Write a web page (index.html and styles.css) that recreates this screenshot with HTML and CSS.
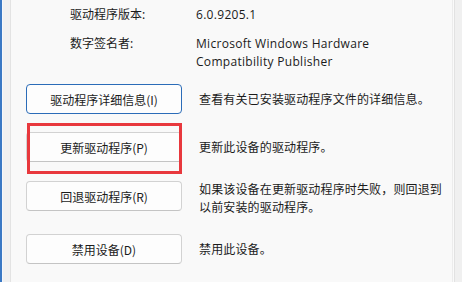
FILE: index.html
```html
<!DOCTYPE html>
<html lang="zh-CN">
<head>
<meta charset="utf-8">
<link rel="stylesheet" href="styles.css">
</head>
<body>
<div class="window">
  <div class="left-edge"><div class="blue"></div><div class="gap"></div><div class="pane"></div></div>
  <div class="content">
    <div class="info">
      <div class="info-row">
        <div class="label">驱动程序版本:</div>
        <div class="value">6.0.9205.1</div>
      </div>
      <div class="info-row second">
        <div class="label">数字签名者:</div>
        <div class="value">Microsoft Windows Hardware<br>Compatibility Publisher</div>
      </div>
    </div>
    <div class="actions">
      <div class="action">
        <button class="btn default">驱动程序详细信息(I)</button>
        <div class="desc">查看有关已安装驱动程序文件的详细信息。</div>
      </div>
      <div class="action highlighted">
        <button class="btn">更新驱动程序(P)</button>
        <div class="desc">更新此设备的驱动程序。</div>
        <div class="red-box"></div>
      </div>
      <div class="action multi">
        <button class="btn">回退驱动程序(R)</button>
        <div class="desc">如果该设备在更新驱动程序时失败，则回退到<br>以前安装的驱动程序。</div>
      </div>
      <div class="action last">
        <button class="btn">禁用设备(D)</button>
        <div class="desc">禁用此设备。</div>
      </div>
    </div>
  </div>
  <div class="right-edge"><div class="line1"></div><div class="gap2"></div><div class="line2"></div><div class="outer"></div></div>
</div>
</body>
</html>
```
FILE: styles.css
```css
html, body {
  margin: 0;
  padding: 0;
  width: 462px;
  height: 282px;
  overflow: hidden;
  background: #f9f9f9;
}
.window {
  display: flex;
  width: 462px;
  height: 282px;
  font-family: "Segoe UI", "Noto Sans", "Noto Sans CJK SC", sans-serif;
  font-size: 12px;
  color: #1b1b1b;
}
.left-edge {
  display: flex;
  width: 11px;
  flex: none;
}
.left-edge .blue {
  width: 2px;
  background: #3a78c4;
}
.left-edge .gap {
  width: 1px;
  background: #f4f7fb;
}
.left-edge .pane {
  flex: 1;
  background: #f0f0f0;
  border-right: 1px solid #e3e3e3;
}
.content {
  flex: 1;
  display: flex;
  flex-direction: column;
}
.info {
  padding: 6px 0 0 59px;
}
.info-row {
  display: flex;
  line-height: 18px;
}
.info-row.second {
  margin-top: 11px;
}
.label {
  width: 126px;
  flex: none;
}
.value {
  font-family: "Segoe UI", "Open Sans", "Noto Sans CJK SC", sans-serif;
  letter-spacing: 0.3px;
}
.actions {
  padding: 13px 0 0 15px;
  display: flex;
  flex-direction: column;
  gap: 18px;
}
.action {
  display: flex;
  align-items: center;
  position: relative;
}
.action.multi {
  align-items: flex-start;
  margin-top: 1px;
}
.action.multi .desc {
  margin-top: -1px;
}
.btn {
  width: 156px;
  height: 30px;
  flex: none;
  box-sizing: border-box;
  background: #fdfdfd;
  border: 1px solid #d2d2d2;
  border-bottom-color: #c4c4c4;
  border-radius: 4px;
  font-family: "Noto Sans CJK SC", sans-serif;
  font-size: 12px;
  color: #1b1b1b;
  padding: 0;
  margin: 0;
}
.btn.default {
  border: 1px solid #2b6cb8;
}
.desc {
  margin-left: 17px;
  line-height: 18px;
  font-family: "Noto Sans CJK SC", sans-serif;
  letter-spacing: 0.15px;
}
.red-box {
  position: absolute;
  left: 1px;
  top: -9px;
  width: 155px;
  height: 51px;
  box-sizing: border-box;
  border: 3px solid #e8383d;
}
.right-edge {
  display: flex;
  width: 10px;
  flex: none;
}
.right-edge .line1 {
  width: 1px;
  background: #ececec;
}
.right-edge .gap2 {
  width: 1px;
  background: #fafafa;
}
.right-edge .line2 {
  width: 1px;
  background: #e2e2e2;
}
.right-edge .outer {
  flex: 1;
  background: #f0f0f0;
}
```
